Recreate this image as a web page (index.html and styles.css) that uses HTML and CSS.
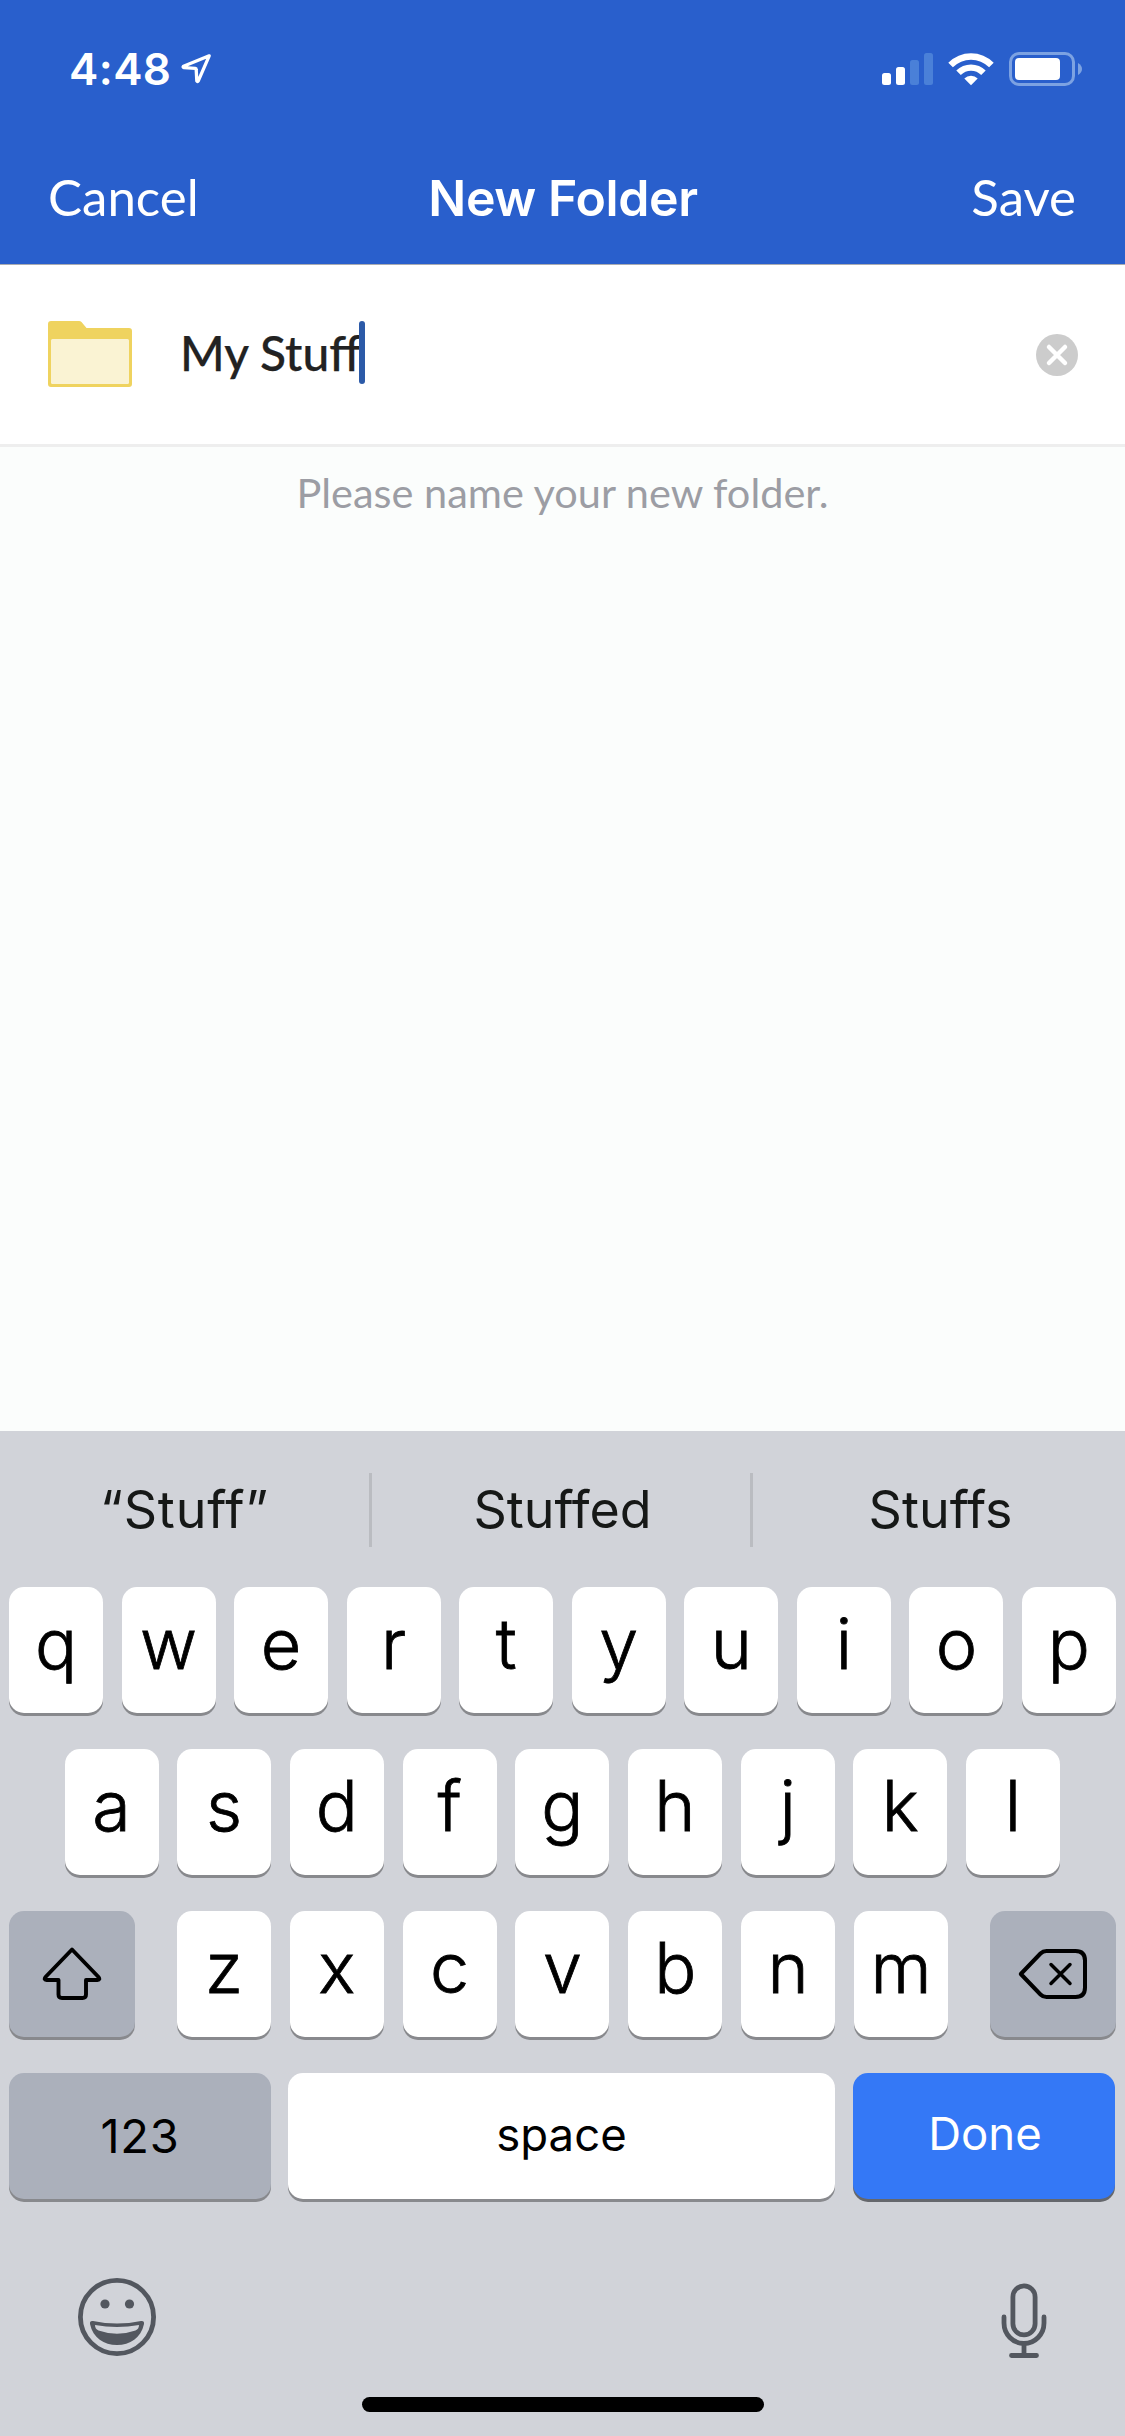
FILE: index.html
```html
<!DOCTYPE html>
<html lang="en">
<head>
<meta charset="utf-8">
<title>New Folder</title>
<link rel="stylesheet" href="styles.css">
</head>
<body>
<div class="screen">
  <header class="header">
    <div class="status">
      <div class="status-left">
        <span class="time">4:48</span>
        <svg class="location" width="32" height="32" viewBox="0 0 32 32"><path d="M29.200 2.800 3.500 13.200q-1 1 .4 1.400L15.300 15.400q.9.100.9 1L16.800 28q.7 1.200 1.500-.1Z" fill="none" stroke="#fff" stroke-width="3.300" stroke-linejoin="round"/></svg>
      </div>
      <svg class="indicators" width="202" height="36" viewBox="0 0 202 36">
        <g fill="#fff">
          <rect x="1" y="22" width="9" height="12" rx="2.500"/>
          <rect x="15" y="16" width="9" height="18" rx="2.500"/>
          <g fill="#4a80d8"><rect x="29" y="9" width="9" height="25" rx="2.500"/><rect x="43" y="2" width="9" height="32" rx="2.500"/></g>
          <path d="M67.300 11.700a32 32 0 0 1 45.400 0l-4.600 4.600a25.500 25.500 0 0 0-36.200 0Z"/>
          <path d="M75.300 19.600a20.800 20.800 0 0 1 29.400 0l-4.500 4.500a14.400 14.400 0 0 0-20.400 0Z"/>
          <path d="M83.300 27.500a9.500 9.500 0 0 1 13.400 0L90 34.200Z"/>
          <rect x="134" y="7" width="45" height="22" rx="4"/>
        </g>
        <rect x="129.500" y="2.500" width="63" height="31" rx="8.500" fill="none" stroke="#7ca2e2" stroke-width="3"/>
        <path d="M197 12q4 2.500 4 6t-4 6Z" fill="#7ca2e2"/>
      </svg>
    </div>
    <nav class="nav">
      <span class="nav-action">Cancel</span>
      <h1 class="nav-title">New Folder</h1>
      <span class="nav-action nav-save">Save</span>
    </nav>
  </header>

  <section class="name-row">
    <svg width="84" height="66" viewBox="0 0 84 66"><path d="M3 0H31q1.500 0 2.500 1L38.500 7H81q3 0 3 3V63q0 3-3 3H3q-3 0-3-3V3q0-3 3-3Z" fill="#efd35f"/><rect x="3" y="18" width="78" height="45" rx="1.500" fill="#faf3d3"/></svg>
    <div class="name-field"><span class="name-text">My Stuff</span><span class="caret"></span></div>
    <svg class="clear" width="42" height="42" viewBox="0 0 42 42"><circle cx="21" cy="21" r="21" fill="#ccc"/><path d="M13 13 29 29M29 13 13 29" stroke="#fff" stroke-width="4.500" stroke-linecap="round"/></svg>
  </section>

  <main class="content"><p class="hint">Please name your new folder.</p></main>

  <section class="keyboard">
    <div class="suggestions">
      <span class="suggestion suggestion-quoted">“Stuff”</span>
      <span class="suggestion">Stuffed</span>
      <span class="suggestion">Stuffs</span>
    </div>
    <div class="keys">
      <div class="key-row"><span class="key">q</span><span class="key">w</span><span class="key">e</span><span class="key">r</span><span class="key">t</span><span class="key">y</span><span class="key">u</span><span class="key">i</span><span class="key">o</span><span class="key">p</span></div>
      <div class="key-row key-row-middle"><span class="key">a</span><span class="key">s</span><span class="key">d</span><span class="key">f</span><span class="key">g</span><span class="key">h</span><span class="key">j</span><span class="key">k</span><span class="key">l</span></div>
      <div class="key-row">
        <span class="key key-side"><svg width="60" height="54" viewBox="0 0 60 54"><path d="M30 2.500 56.500 30q2 3-1 3H44V47.500q0 3.500-3.500 3.500H20q-3.500 0-3.500-3.500V33H4.500q-3 0-1-3Z" fill="none" stroke="#000" stroke-width="3.900" stroke-linejoin="round"/></svg></span>
        <div class="key-group"><span class="key">z</span><span class="key">x</span><span class="key">c</span><span class="key">v</span><span class="key">b</span><span class="key">n</span><span class="key">m</span></div>
        <span class="key key-side"><svg width="70" height="52" viewBox="0 0 70 52" fill="none" stroke="#000" stroke-linecap="round" stroke-linejoin="round"><path d="M2.800 26 22.500 5.500q2.500-2.500 6-2.500H57.500q9.500 0 9.500 9.500V39.500q0 9.500-9.500 9.500H28.500q-3.500 0-6-2.500Z" stroke-width="4"/><path d="M33 16.500 52 35.500M52 16.500 33 35.500" stroke-width="3.500"/></svg></span>
      </div>
      <div class="key-row key-row-bottom">
        <span class="key key-wide key-numbers">123</span>
        <span class="key key-space">space</span>
        <span class="key key-wide key-done">Done</span>
      </div>
    </div>
    <div class="tools">
      <svg width="78" height="80" viewBox="0 0 78 80"><g fill="#53575f"><circle cx="27" cy="27" r="4.600"/><circle cx="51.500" cy="27" r="4.600"/><path fill-rule="evenodd" d="M15 44q24 5 48 0 3.500-.5 3 3C63 61 52 68 39 68S15 61 12 47q-.5-3.500 3-3ZM17 48q0 4 3.500 5.500 18.500 6.500 37 0Q61 52 61 48 39 52 17 48Z"/></g><circle cx="39" cy="40" r="36.600" fill="none" stroke="#53575f" stroke-width="4.800"/></svg>
      <svg class="mic" width="46" height="76" viewBox="0 0 46 76" fill="none" stroke="#53575f" stroke-width="4.800" stroke-linecap="round"><rect x="11.900" y="2.900" width="22.200" height="49" rx="11.100"/><path d="M3 34V40a20 20.500 0 0 0 40 0V34M23 61V72M10.500 72.500H35.500"/></svg>
    </div>
    <div class="home-bar"></div>
  </section>
</div>
</body>
</html>
```
FILE: styles.css
```css
* { box-sizing: border-box; }
body { margin: 0; }
svg { display: block; flex: none; }

.screen {
  display: flex;
  flex-direction: column;
  width: 1125px;
  height: 2436px;
  background: #fbfdfc;
  font-family: Inter, "Liberation Sans", sans-serif;
  overflow: hidden;
}

/* Header */
.header {
  flex: none;
  height: 265px;
  padding-top: 39px;
  background: #295fcc;
  border-bottom: 1px solid #a9abb1;
  color: #fff;
}
.status {
  display: flex;
  justify-content: space-between;
  align-items: center;
  height: 60px;
  padding: 0 42px 0 69px;
}
.status-left { display: flex; align-items: center; gap: 11px; }
.time { width: 100px; font-size: 44px; font-weight: 600; line-height: 60px; letter-spacing: 0.4px; }
.nav {
  display: grid;
  grid-template-columns: 1fr auto 1fr;
  align-items: baseline;
  padding: 68px 49px 0 48px;
  line-height: 60px;
}
.nav-action { font-family: Lato, sans-serif; font-size: 51px; }
.nav-save { text-align: right; }
.nav-title { margin: 0; padding-left: 2px; font-size: 50px; font-weight: 600; letter-spacing: -0.4px; }

/* Folder name */
.name-row {
  display: flex;
  align-items: center;
  flex: none;
  height: 182px;
  padding: 0 47px 1px 48px;
  background: #fff;
  border-bottom: 3px solid #eee;
}
.name-field {
  display: flex;
  flex: 1;
  align-items: center;
  margin-left: 48px;
  font: 500 48px/62px Lato, sans-serif;
  color: #222;
}
.name-text { padding-bottom: 2px; -webkit-text-stroke: 0.25px #222; }
.caret { width: 6px; height: 63px; margin: 0 0 3px -2px; border-radius: 3px; background: #2c5aa8; }
.clear { margin-top: 2px; }
.content { flex: 1; }
.hint {
  margin: 15px 0 0;
  font: 41.5px/60px Lato, sans-serif;
  text-align: center;
  color: #9c9da4;
}

/* Keyboard */
.keyboard { flex: none; height: 1005px; background: #d1d3d9; }
.suggestions {
  display: grid;
  grid-template-columns: 372px 381px 372px;
  padding-top: 42px;
  height: 156px;
}
.suggestion {
  height: 74px;
  padding-left: 3px;
  border-right: 3px solid #babcc1;
  font-size: 52px;
  line-height: 73px;
  text-align: center;
  color: #161817;
}
.suggestion-quoted { padding-left: 0; letter-spacing: 0.8px; }
.suggestion:last-child { border-right: 0; }
.keys { display: grid; gap: 36px; padding: 0 9px; }
.key-row { display: flex; justify-content: space-between; }
.key-row-middle { padding: 0 56px 0 55.5px; }
.key-row-bottom { padding-right: 1px; }
.key-group { display: flex; justify-content: space-between; width: 771px; }
.key {
  display: flex;
  justify-content: center;
  align-items: center;
  width: 94px;
  height: 126px;
  padding-bottom: 12px;
  border-radius: 15px;
  background: #fff;
  box-shadow: 0 3px 0 #88898d;
  font-size: 70px;
  font-weight: 300;
  line-height: 80px;
  color: #000;
  -webkit-text-stroke: 0.8px #000;
}
.key-side, .key-wide, .key-space { padding: 0 0 3px; font-weight: 400; font-size: 46px; -webkit-text-stroke: 0; }
.key-side { width: 126px; padding: 0; background: #abb0bb; }
.key-wide { width: 262px; }
.key-space { width: 547px; margin-left: -1px; font-size: 45.5px; }
.key-numbers { padding: 0; background: #abb0bb; font-size: 47px; letter-spacing: 0.8px; }
.key-done { padding: 0 0 4px 2px; background: #3478f6; color: #fff; font-size: 45.5px; box-shadow: 0 3px 0 #65676c; }
.tools {
  display: flex;
  justify-content: space-between;
  align-items: flex-start;
  height: 158px;
  padding: 78px 78px 0;
}
.mic { margin-top: 6px; }
.home-bar { width: 402px; height: 15px; margin: 40px auto 0; border-radius: 8px; background: #000; }
```
